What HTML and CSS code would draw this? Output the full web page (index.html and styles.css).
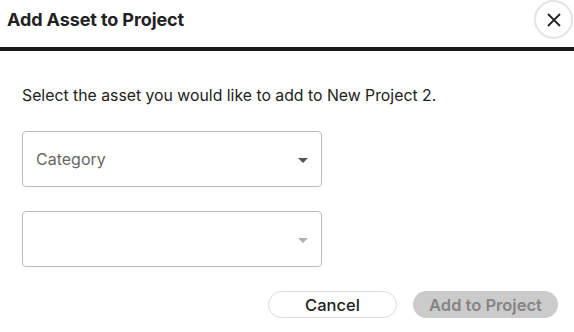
FILE: index.html
```html
<!DOCTYPE html>
<html>
<head>
<meta charset="utf-8">
<link rel="stylesheet" href="styles.css">
</head>
<body>
<div class="dialog">
  <div class="header">
    <h1 class="title">Add Asset to Project</h1>
    <button class="close" aria-label="Close">
      <svg width="14" height="14" viewBox="0 0 14 14"><path d="M1 1L13 13M13 1L1 13" stroke="#222" stroke-width="1.8" fill="none"/></svg>
    </button>
  </div>
  <div class="bar"></div>
  <div class="body">
    <p class="intro">Select the asset you would like to add to New Project 2.</p>
    <div class="select">
      <span class="placeholder">Category</span>
      <span class="arrow"></span>
    </div>
    <div class="select disabled">
      <span class="placeholder"></span>
      <span class="arrow"></span>
    </div>
  </div>
  <div class="footer">
    <button class="btn cancel">Cancel</button>
    <button class="btn add">Add to Project</button>
  </div>
</div>
</body>
</html>
```
FILE: styles.css
```css
* { box-sizing: border-box; }
html, body { margin: 0; padding: 0; background: #fff; }
body { font-family: Inter, "Liberation Sans", sans-serif; color: #222; width: 574px; height: 332px; overflow: hidden; }
.dialog { display: flex; flex-direction: column; }
.header { display: flex; align-items: center; justify-content: space-between; height: 47px; padding: 0 1px 9px 7px; }
.title { margin: 0; font-size: 18px; font-weight: 700; color: #222; letter-spacing: -0.1px; }
.close { width: 39px; height: 39px; border-radius: 50%; border: 2px solid #e4e4e4; background: #fff; display: flex; align-items: center; justify-content: center; padding: 0; margin-top: 1px; }
.bar { height: 4px; background: #1a1a1a; }
.body { padding: 0 22px; }
.intro { margin: 35px 0 0; font-size: 15.8px; line-height: 20px; color: #222; }
.select { width: 300px; height: 56px; border: 1px solid #bdbdbd; border-radius: 4px; display: flex; align-items: center; justify-content: space-between; padding: 0 13px 0 13px; margin-top: 25px; }
.select + .select { margin-top: 24px; }
.placeholder { font-size: 16px; color: #666; }
.arrow { width: 0; height: 0; border-left: 5px solid transparent; border-right: 5px solid transparent; border-top: 5px solid #555; margin-top: 2px; }
.disabled .arrow { border-top-color: #b0b0b0; }
.footer { display: flex; justify-content: flex-end; gap: 16px; padding: 24px 16px 0 0; }
.btn { height: 27px; border-radius: 14px; font-family: Inter, "Liberation Sans", sans-serif; font-size: 16.5px; font-weight: 500; padding: 0; }
.cancel { width: 129px; background: #fff; border: 1px solid #dcdcdc; color: #222; }
.add { width: 145px; background: #cbcbcb; border: none; color: #858585; font-weight: 600; }
```
